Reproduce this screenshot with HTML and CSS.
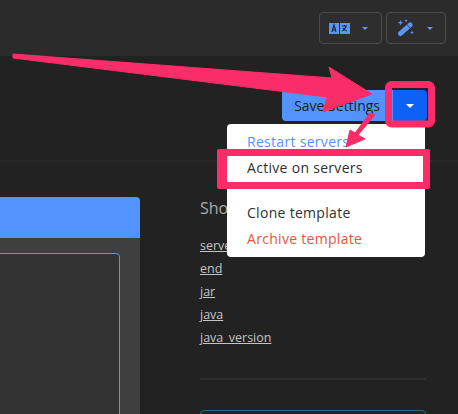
FILE: index.html
```html
<!DOCTYPE html>
<html>
<head>
  <meta charset="utf-8">
  <title>Template settings</title>
  <link rel="stylesheet" href="styles.css">
</head>
<body>
  <div class="topbar">
    <button class="tool tool-lang">
      <svg width="21" height="11" viewBox="0 0 21 11">
        <rect x="0" y="0" width="10" height="11" fill="#5b96f5"/>
        <rect x="11" y="0" width="10" height="11" fill="#5b96f5"/>
        <path d="M3 9 5 2 7 9M3.700 7h2.600" fill="none" stroke="#1f2a3d" stroke-width="1.200"/>
        <path d="M13 3h5M15.500 2v1M17.200 3c-.6 2.400-2 4-3.900 5M14 5c.8 1.400 2 2.500 3.800 3" fill="none" stroke="#1f2a3d" stroke-width="1.100"/>
      </svg>
      <span class="caret caret-blue"></span>
    </button>
    <button class="tool tool-magic">
      <svg width="18" height="18" viewBox="0 0 18 18">
        <path d="M3.500 14.500 13 6" fill="none" stroke="#5b96f5" stroke-width="5" stroke-linecap="round"/>
        <path d="M9.500 5.200 13.200 9.400" fill="none" stroke="#2e2e2e" stroke-width=".8"/>
        <path d="M3.500 1 4.300 3 6.300 3.700 4.300 4.500 3.500 6.500 2.700 4.500 .7 3.700 2.700 3zM9 0l.5 1.200 1.200.5-1.200.5L9 3.400l-.5-1.200-1.200-.5 1.200-.5zM15 11.500l.6 1.400 1.400.6-1.400.6-.6 1.400-.6-1.400-1.400-.6 1.400-.6z" fill="#5b96f5"/>
      </svg>
      <span class="caret caret-blue"></span>
    </button>
  </div>

  <div class="actions">
    <button class="save">Save Settings</button>
    <button class="split"><span class="caret caret-white"></span></button>
  </div>

  <div class="content">
    <div class="card">
      <div class="card-head"></div>
      <div class="card-body">
        <div class="editor"></div>
      </div>
    </div>
    <div class="side">
      <h3>Shortcodes</h3>
      <ul class="codes">
        <li><a href="#">server</a></li>
        <li><a href="#">end</a></li>
        <li><a href="#">jar</a></li>
        <li><a href="#">java</a></li>
        <li><a href="#">java_version</a></li>
      </ul>
      <div class="rule"></div>
      <div class="note"></div>
    </div>
  </div>

  <div class="menu">
    <a class="item item-blue" href="#">Restart servers</a>
    <a class="item" href="#">Active on servers</a>
    <div class="gap"></div>
    <a class="item" href="#">Clone template</a>
    <a class="item item-red" href="#">Archive template</a>
  </div>

  <!-- annotations drawn over the screenshot -->
  <svg class="marks" width="458" height="414" viewBox="0 0 458 414">
    <path d="M13 54 332 78 329 67 372 94 323 112 327 97 13 58Z" fill="#fb2d68" stroke="#fb2d68" stroke-linejoin="round"/>
    <rect x="388.500" y="84.500" width="43" height="39.500" rx="3" fill="none" stroke="#fb2d68" stroke-width="7"/>
    <path d="M219 149h209a2 2 0 0 1 2 2v36a2 2 0 0 1-2 2H219a2 2 0 0 1-2-2v-36a2 2 0 0 1 2-2zM227 156v26h196v-26z" fill="#fb2d68" fill-rule="evenodd"/>
    <path d="M370 113 375 115 358 135 365 139 346 147 350 130 355 133Z" fill="#fb2d68" stroke="#fb2d68" stroke-linejoin="round"/>
  </svg>
</body>
</html>
```

FILE: styles.css
```css
* {
  box-sizing: border-box;
}

html, body {
  margin: 0;
  height: 414px;
  overflow: hidden;
}

body {
  position: relative;
  background: #222;
  color: #ccc;
  font-family: "Open Sans", sans-serif;
}

button {
  font-family: inherit;
  cursor: pointer;
}

.topbar {
  height: 56px;
  background: #2b2b2b;
  display: flex;
  justify-content: flex-end;
  gap: 4px;
  padding: 12px 12px 0 0;
}

.tool {
  height: 32px;
  display: flex;
  align-items: center;
  background: #2e2e2e;
  border: 1px solid #4b4b4b;
  border-radius: 4px;
  padding: 0;
}

.tool-lang {
  width: 63px;
  padding-left: 9px;
  gap: 12px;
}

.tool-magic {
  width: 60px;
  padding-left: 10px;
  gap: 12px;
}

.caret {
  width: 0;
  height: 0;
  border-left: 3px solid transparent;
  border-right: 3px solid transparent;
}

.caret-blue {
  border-top: 3px solid #5b96f5;
}

.caret-white {
  border-left-width: 4px;
  border-right-width: 4px;
  border-top: 4px solid #fff;
}

.actions {
  display: flex;
  justify-content: flex-end;
  height: 106px;
  padding: 34px 31px 0 0;
  border-bottom: 2px solid #2a2a2a;
}

.save {
  width: 111px;
  height: 31px;
  background: #5393ff;
  color: #1c1c1c;
  border: 0;
  border-radius: 4px 0 0 4px;
  font-size: 14px;
  padding: 0 13px 0 0;
  text-align: right;
}

.split {
  width: 34px;
  height: 31px;
  background: #0d62f5;
  border: 0;
  border-radius: 0 4px 4px 0;
  padding: 0;
  display: flex;
  align-items: center;
  justify-content: center;
}

.content {
  display: flex;
  height: 252px;
  overflow: hidden;
  padding-top: 35px;
}

.card {
  width: 160px;
  margin-left: -20px;
  height: 260px;
  flex: none;
  background: #3f3f3f;
  border-radius: 4px 4px 0 0;
}

.card-head {
  height: 41px;
  background: #5393ff;
  border-radius: 4px 4px 0 0;
}

.card-body {
  padding: 15px 20px 0 0;
}

.editor {
  height: 204px;
  background: #333;
  border: 1px solid #5f93e8;
  border-radius: 4px 4px 0 0;
}

.side {
  width: 226px;
  margin-left: 60px;
}

.side h3 {
  margin: 0;
  font-size: 16px;
  line-height: 22px;
  font-weight: 400;
  color: #ababab;
}

.codes {
  list-style: none;
  margin: 15px 0 0;
  padding: 0;
}

.codes li {
  height: 23px;
  font-size: 12.500px;
  line-height: 23px;
}

.codes a {
  color: #c4c4c4;
}

.rule {
  height: 2px;
  background: #2e2e2e;
  margin-top: 29px;
}

.note {
  height: 40px;
  margin-top: 30px;
  border: 1px solid #1c6f80;
  border-radius: 4px;
  background: #222;
}

.menu {
  position: absolute;
  left: 227px;
  top: 124px;
  width: 198px;
  height: 133px;
  padding: 5px 0;
  background: #fff;
  border-radius: 4px;
}

.item {
  display: block;
  height: 26px;
  padding-left: 20px;
  font-size: 14px;
  line-height: 26px;
  letter-spacing: .3px;
  color: #2f2f2f;
  text-decoration: none;
}

.item-blue {
  color: #5393ff;
}

.item-red {
  color: #e4553a;
}

.gap {
  height: 19px;
}

.marks {
  position: absolute;
  left: 0;
  top: 0;
}
```
